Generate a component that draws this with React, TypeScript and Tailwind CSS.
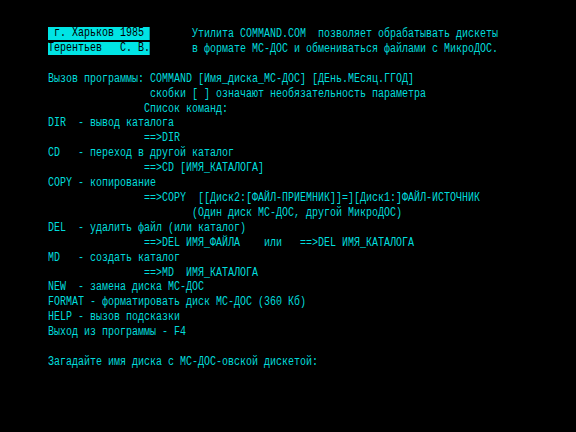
import React from "react";

const lines: string[] = [
  "",
  "",
  "",
  "Вызов программы: COMMAND [Имя_диска_МС-ДОС] [ДЕнь.МЕсяц.ГГОД]",
  "                 скобки [ ] означают необязательность параметра",
  "                Список команд:",
  "DIR  - вывод каталога",
  "                ==>DIR",
  "CD   - переход в другой каталог",
  "                ==>CD [ИМЯ_КАТАЛОГА]",
  "COPY - копирование",
  "                ==>COPY  [[Диск2:[ФАЙЛ-ПРИЕМНИК]]=][Диск1:]ФАЙЛ-ИСТОЧНИК",
  "                        (Один диск МС-ДОС, другой МикроДОС)",
  "DEL  - удалить файл (или каталог)",
  "                ==>DEL ИМЯ_ФАЙЛА    или   ==>DEL ИМЯ_КАТАЛОГА",
  "MD   - создать каталог",
  "                ==>MD  ИМЯ_КАТАЛОГА",
  "NEW  - замена диска МС-ДОС",
  "FORMAT - форматировать диск МС-ДОС (360 Кб)",
  "HELP - вызов подсказки",
  "Выход из программы - F4",
  "",
  "Загадайте имя диска с МС-ДОС-овской дискетой:",
];

export default function App() {
  return (
    <div className="w-[576px] h-[432px] bg-black overflow-hidden">
      <div className="pl-[48px] pt-[27px]">
        <div
          className="origin-top-left scale-x-[0.8333] text-[12px] leading-[14.9px] text-[#00dcdc] whitespace-pre"
          style={{ fontFamily: '"Liberation Mono", "DejaVu Sans Mono", monospace' }}
        >
          {lines.map((l, i) => {
            if (i === 0) {
              return (
                <div key={i}>
                  <span className="inline-block align-top h-[13px] leading-[13px] bg-[#00e4e4] text-black"> г. Харьков 1985 </span>
                  {"       Утилита COMMAND.COM  позволяет обрабатывать дискеты"}
                </div>
              );
            }
            if (i === 1) {
              return (
                <div key={i}>
                  <span className="inline-block align-top h-[13px] leading-[13px] bg-[#00e4e4] text-black">Терентьев   С. В.</span>
                  {"       в формате МС-ДОС и обмениваться файлами с МикроДОС."}
                </div>
              );
            }
            return <div key={i}>{l === "" ? " " : l}</div>;
          })}
        </div>
      </div>
    </div>
  );
}
